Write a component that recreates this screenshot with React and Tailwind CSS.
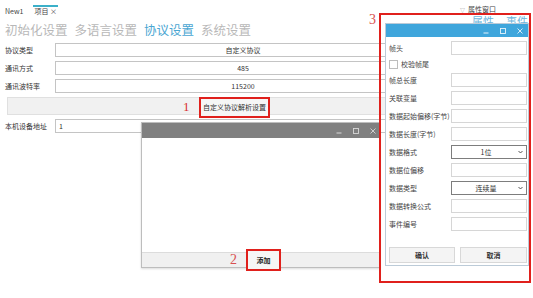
import React from "react";

const WinIcons = ({ color, gap }) => (
  <div className={`flex items-center ${gap}`}>
    <svg width="6" height="6" viewBox="0 0 6 6"><path d="M0.5 5 H5.5" stroke={color} strokeWidth="1" /></svg>
    <svg width="6" height="6" viewBox="0 0 6 6"><rect x="0.5" y="0.5" width="5" height="5" fill="none" stroke={color} strokeWidth="0.9" /></svg>
    <svg width="6" height="6" viewBox="0 0 6 6"><path d="M0.5 0.5 L5.5 5.5 M5.5 0.5 L0.5 5.5" stroke={color} strokeWidth="0.9" /></svg>
  </div>
);

const Field = ({ label, children }) => (
  <div className="flex h-[14px] items-center justify-between">
    <span className="text-[7px] leading-none text-[#444]">{label}</span>
    {children}
  </div>
);

const Input = () => <div className="h-full w-[76px] border border-[#d6d6d6] bg-white" />;

const Select = ({ value }) => (
  <div className="relative flex h-full w-[76px] items-center justify-center border border-[#7d7d7d] bg-white pr-[6px]">
    <span className="text-[7px] leading-none text-[#333]">{value}</span>
    <svg className="absolute right-[3px] top-[4px]" width="5" height="4" viewBox="0 0 5 4">
      <path d="M0.5 1 L2.5 3 L4.5 1" fill="none" stroke="#444" strokeWidth="0.9" />
    </svg>
  </div>
);

export default function App() {
  return (
    <div className="relative h-[298px] w-[533px] overflow-hidden bg-white font-['Noto_Sans_CJK_SC','Noto_Sans',sans-serif] text-[#333]">
      {/* tab bar */}
      <div className="flex h-[17px] items-start gap-[10px] pl-[5px] pt-[5px] text-[7px] leading-none">
        <div className="pt-[3px] text-[#444]">New1</div>
        <div className="border-t-2 border-[#3bb0c9] px-[1px] pt-[1px] text-[#444]">项目 ×</div>
      </div>

      {/* heading */}
      <div className="mt-[1px] flex h-[24px] items-center gap-[7px] pl-[5px] text-[12.5px] leading-none text-[#b8b8b8]">
        <span>初始化设置</span>
        <span>多语言设置</span>
        <span className="text-[#4aa6d2]">协议设置</span>
        <span>系统设置</span>
      </div>

      {/* form */}
      <div className="mt-[1px] flex flex-col gap-[4px] pl-[5px]">
        <div className="flex h-[14px] items-center">
          <span className="w-[50px] text-[7px] leading-none">协议类型</span>
          <div className="flex h-full w-[376px] items-center justify-center border border-[#c4c4c4] text-[7px] leading-none">自定义协议</div>
        </div>
        <div className="flex h-[14px] items-center">
          <span className="w-[50px] text-[7px] leading-none">通讯方式</span>
          <div className="flex h-full w-[376px] items-center justify-center border border-[#c4c4c4] text-[7px] leading-none">485</div>
        </div>
        <div className="flex h-[14px] items-center">
          <span className="w-[50px] text-[7px] leading-none">通讯波特率</span>
          <div className="flex h-full w-[376px] items-center justify-center border border-[#c4c4c4] text-[7px] leading-none">115200</div>
        </div>
        <div className="ml-[2px] flex h-[18px] w-[380px] items-start border border-[#e0e0e0] bg-[#f1f1f1] pl-[175px]">
          <span className="mt-[2px] w-[16px] font-['Liberation_Serif',serif] text-[13px] leading-none text-[#d83030]">1</span>
          <div className="-mt-[1px] flex h-[21px] w-[71px] shrink-0 items-center justify-center border-2 border-[#e0201c] bg-[#f6f6f6] text-[7px] leading-none">
            自定义协议解析设置
          </div>
        </div>
        <div className="flex h-[14px] items-center">
          <span className="w-[50px] text-[7px] leading-none">本机设备地址</span>
          <div className="flex h-full w-[376px] items-center border border-[#c4c4c4] pl-[3px] text-[7px] leading-none">1</div>
        </div>
      </div>

      {/* properties window behind */}
      <div className="absolute left-[460px] top-[6px] flex items-center gap-[3px] text-[7px] leading-none">
        <span className="text-[5px] text-[#999]">▽</span>
        <span className="text-[#444]">属性窗口</span>
      </div>
      <div className="absolute left-[472px] top-[16px] flex gap-[12px] text-[11px] leading-none text-[#6db5dc]">
        <span>属性</span>
        <span>事件</span>
      </div>

      {/* gray dialog */}
      <div className="absolute left-[141px] top-[122px] flex h-[146px] w-[239px] flex-col border border-[#bdbdbd] bg-white shadow-[0_1px_2px_rgba(0,0,0,0.15)]">
        <div className="flex h-[15px] items-center justify-end bg-[#808080] pr-[3px]">
          <WinIcons color="#d8d8d8" gap="gap-[11px]" />
        </div>
        <div className="flex-1 bg-white" />
        <div className="flex h-[15px] items-center border-t border-[#dcdcdc] bg-[#f0f0f0] pl-[88px]">
          <span className="w-[16px] font-['Liberation_Serif',serif] text-[14px] leading-none text-[#d85050]">2</span>
          <div className="flex h-[22px] w-[35px] shrink-0 items-center justify-center border-2 border-[#e0201c] bg-[#f6f6f6] text-[7px] font-bold leading-none text-[#222]">
            添加
          </div>
        </div>
      </div>

      {/* right dialog */}
      <span className="absolute left-[369px] top-[13px] font-['Liberation_Serif',serif] text-[14px] leading-none text-[#d85050]">3</span>
      <div className="absolute left-[385px] top-[23px] flex h-[243px] w-[144px] flex-col border border-[#bccbd8] bg-white">
        <div className="flex h-[13px] shrink-0 items-center justify-end bg-[#3fa6dc] pr-[5px]">
          <WinIcons color="#e6f3fb" gap="gap-[11px]" />
        </div>
        <div className="flex flex-col gap-[4px] pl-[3px] pr-[1px] pt-[4px]">
          <Field label="帧头"><Input /></Field>
          <div className="flex h-[10px] items-center">
            <div className="h-[9px] w-[9px] border border-[#bdbdbd] bg-white" />
            <span className="ml-[3px] text-[7px] leading-none text-[#444]">校验帧尾</span>
          </div>
          <Field label="帧总长度"><Input /></Field>
          <Field label="关联变量"><Input /></Field>
          <Field label="数据起始偏移(字节)"><Input /></Field>
          <Field label="数据长度(字节)"><Input /></Field>
          <Field label="数据格式"><Select value="1位" /></Field>
          <Field label="数据位偏移"><Input /></Field>
          <Field label="数据类型"><Select value="连续量" /></Field>
          <Field label="数据转换公式"><Input /></Field>
          <Field label="事件编号"><Input /></Field>
          <div className="mt-[12px] flex gap-[5px]">
            <div className="flex h-[16px] w-[67px] items-center justify-center border border-[#d8d8d8] bg-[#f4f4f4] text-[7px] font-bold leading-none text-[#333]">确认</div>
            <div className="flex h-[16px] w-[68px] items-center justify-center border border-[#d8d8d8] bg-[#f4f4f4] text-[7px] font-bold leading-none text-[#333]">取消</div>
          </div>
        </div>
      </div>
      <div className="pointer-events-none absolute left-[379px] top-[13px] h-[270px] w-[152px] border-2 border-[#e0201c]" />
    </div>
  );
}
